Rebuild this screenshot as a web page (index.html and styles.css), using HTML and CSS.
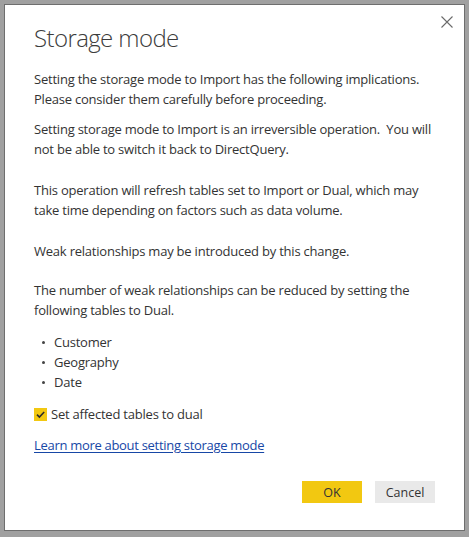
FILE: index.html
```html
<!DOCTYPE html>
<html lang="en">
<head>
<meta charset="utf-8">
<title>Storage mode</title>
<link rel="stylesheet" href="styles.css">
</head>
<body>
<div class="dialog">
  <button class="close" aria-label="Close">
    <svg width="12" height="12" viewBox="0 0 12 12"><path d="M0.5 0.5 L11.5 11.5 M11.5 0.5 L0.5 11.5" stroke="#6a6a6a" stroke-width="1.1" fill="none"/></svg>
  </button>
  <h1 class="title">Storage mode</h1>
  <p class="p p1">Setting the storage mode to Import has the following implications.<br>Please consider them carefully before proceeding.</p>
  <p class="p p2">Setting storage mode to Import is an irreversible operation.&nbsp; You will<br>not be able to switch it back to DirectQuery.</p>
  <p class="p p3">This operation will refresh tables set to Import or Dual, which may<br>take time depending on factors such as data volume.</p>
  <p class="p p4">Weak relationships may be introduced by this change.</p>
  <p class="p p5">The number of weak relationships can be reduced by setting the<br>following tables to Dual.</p>
  <ul class="list">
    <li>Customer</li>
    <li>Geography</li>
    <li>Date</li>
  </ul>
  <label class="check">
    <span class="box">
      <svg width="13" height="13" viewBox="0 0 13 13"><path d="M3 6.6 L5.4 9 L10.2 4" stroke="#2b2b2b" stroke-width="1.6" fill="none"/></svg>
    </span>
    <span class="check-text">Set affected tables to dual</span>
  </label>
  <a class="link" href="#">Learn more about setting storage mode</a>
  <div class="actions">
    <button class="btn btn-ok">OK</button>
    <button class="btn btn-cancel">Cancel</button>
  </div>
</div>
</body>
</html>
```
FILE: styles.css
```css
html, body {
  margin: 0;
  padding: 0;
}
body {
  background: #a0a0a0;
  padding: 4px;
  width: 469px;
  height: 537px;
  box-sizing: border-box;
  font-family: "Open Sans", "Noto Sans", sans-serif;
  color: #333333;
}
.dialog {
  position: relative;
  width: 461px;
  height: 527px;
  box-sizing: border-box;
  border: 1px solid #6e6e6e;
  background: #ffffff;
  padding: 17px 29px 0 29px;
  display: flex;
  flex-direction: column;
  white-space: nowrap;
}
.close {
  position: absolute;
  top: 10px;
  right: 10px;
  width: 14px;
  height: 14px;
  padding: 1px;
  border: 0;
  background: transparent;
  display: flex;
}
.title {
  margin: 0;
  font-weight: 300;
  font-size: 24px;
  line-height: 32px;
  color: #3c3c3c;
  letter-spacing: -0.6px;
}
.p {
  margin: 0;
  font-size: 13px;
  line-height: 20px;
  letter-spacing: -0.22px;
}
.p1 { margin-top: 15px; }
.p2 { margin-top: 10px; }
.p3 { margin-top: 21px; }
.p4 { margin-top: 21px; }
.p5 { margin-top: 19px; }
.list {
  margin: 12px 0 0 0;
  padding: 0;
  list-style: none;
  font-size: 13px;
  line-height: 20px;
  letter-spacing: -0.22px;
}
.list li {
  position: relative;
  padding-left: 20px;
}
.list li::before {
  content: "";
  position: absolute;
  left: 8px;
  top: 9px;
  width: 3px;
  height: 3px;
  border-radius: 50%;
  background: #444;
}
.check {
  margin-top: 12px;
  display: flex;
  align-items: center;
  gap: 4px;
  font-size: 13px;
  line-height: 20px;
  height: 20px;
  letter-spacing: -0.22px;
}
.box {
  width: 13px;
  height: 13px;
  background: #f2c811;
  display: flex;
}
.link {
  margin-top: 11px;
  align-self: flex-start;
  font-size: 13px;
  line-height: 20px;
  letter-spacing: -0.3px;
  color: #1747a6;
  text-decoration: underline;
  text-underline-offset: 2px;
}
.actions {
  margin-top: 26px;
  display: flex;
  justify-content: flex-end;
  gap: 13px;
}
.btn {
  width: 60px;
  height: 22px;
  border: 0;
  padding: 0;
  font-family: "Open Sans", "Noto Sans", sans-serif;
  font-size: 12.5px;
  color: #333;
}
.btn-ok { background: #f2c811; }
.btn-cancel { background: #e9e9e9; }
```
